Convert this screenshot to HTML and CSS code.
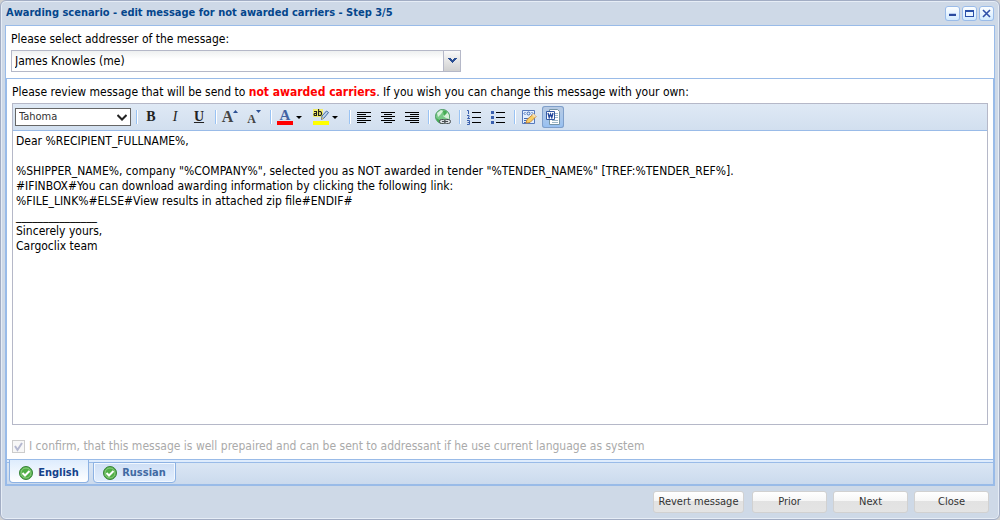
FILE: index.html
```html
<!DOCTYPE html>
<html lang="en">
<head>
<meta charset="utf-8">
<title>Awarding scenario</title>
<link rel="stylesheet" href="styles.css">
</head>
<body>
<main class="window">
  <header class="titlebar">
    <h1 class="title">Awarding scenario - edit message for not awarded carriers - Step 3/5</h1>
    <div class="tools">
      <button class="tool" type="button" aria-label="Minimize"><svg width="15" height="15" viewBox="0 0 15 15"><path d="M4 7h7v1H4z" fill="#b9cdf0"/><path d="M4 8h7v2H4z" fill="#2a4a9e"/></svg></button>
      <button class="tool" type="button" aria-label="Maximize"><svg width="15" height="15" viewBox="0 0 15 15"><path d="M3 4h9v7H3z" fill="#2a50a8"/><path d="M4 6h7v4H4z" fill="#eaf5ff"/></svg></button>
      <button class="tool" type="button" aria-label="Close window"><svg width="15" height="15" viewBox="0 0 15 15"><path d="M4 4l7 7M11 4l-7 7" stroke="#2f4fa8" stroke-width="1.6" fill="none"/></svg></button>
    </div>
  </header>

  <section class="content">
    <div class="addresser">
      <label class="label" for="addresser">Please select addresser of the message:</label>
      <div class="combo">
        <select class="combo-field" id="addresser"><option>James Knowles (me)</option></select>
        <span class="combo-trigger"><svg width="9" height="5" viewBox="0 0 9 5" shape-rendering="crispEdges"><path d="M0 0h3v1h1v1h1V1h1V0h3v1H8v1H7v1H6v1H5v1H4V4H3V3H2V2H1V1H0z" fill="#2b4f93"/></svg></span>
      </div>
    </div>

    <div class="tabpanel">
      <div class="page">
        <label class="label" for="message">Please review message that will be send to <strong class="alert">not awarded carriers</strong>. If you wish you can change this message with your own:</label>
        <div class="editor">
          <div class="toolbar">
            <div class="font">
              <select class="font-field" aria-label="Font"><option>Tahoma</option></select>
              <svg class="font-arrow" width="10" height="7" viewBox="0 0 10 7"><path d="M0.500 1l4.500 4.500L9.500 1" fill="none" stroke="#222" stroke-width="2"/></svg>
            </div>
            <div class="group">
              <button class="btn" type="button" aria-label="Bold"><span class="glyph bold">B</span></button>
              <button class="btn" type="button" aria-label="Italic"><span class="glyph italic">I</span></button>
              <button class="btn" type="button" aria-label="Underline"><span class="glyph underline">U</span></button>
            </div>
            <div class="group">
              <button class="btn" type="button" aria-label="Grow text"><span class="glyph grow">A</span><svg class="mark" width="5" height="3" viewBox="0 0 5 3"><path d="M2.500 0L5 3H0z" fill="#2b4f93"/></svg></button>
              <button class="btn" type="button" aria-label="Shrink text"><span class="glyph shrink">A</span><svg class="mark" width="5" height="3" viewBox="0 0 5 3"><path d="M0 0h5L2.500 3z" fill="#2b4f93"/></svg></button>
            </div>
            <div class="group">
              <button class="btn menu" type="button" aria-label="Font color"><span class="glyph color">A</span><svg width="6" height="3" viewBox="0 0 6 3"><path d="M0 0h6L3 3z"/></svg></button>
              <button class="btn menu" type="button" aria-label="Highlight color"><svg width="16" height="16" viewBox="0 0 16 16"><path d="M0 0h10v8H0z" fill="#f2ee6c"/><path d="M0 12h16v4H0z" fill="#ff0"/><g fill="none" stroke="#1d1d1d" stroke-width="1.100"><path d="M1 2.500h2.500v4H1.500q-1-1 0-2h2M5.600 0v6.500h2q2-2 0-4h-2"/></g><path d="M8.500 10.500l.5-3.500 4.500-5 2 1.500-4.500 5.500z" fill="#bdd3ee" stroke="#456c9f"/><path d="M8.500 10.500l.5-2.500 1.500 1.500z" fill="#e6c45a"/></svg><svg width="6" height="3" viewBox="0 0 6 3"><path d="M0 0h6L3 3z"/></svg></button>
            </div>
            <div class="group">
              <button class="btn" type="button" aria-label="Align left"><svg width="16" height="16" viewBox="0 0 16 16"><path d="M1 3.500h14M1 5.500h9M1 7.500h14M1 9.500h9M1 11.500h14M1 13.500h9" stroke="#000"/></svg></button>
              <button class="btn" type="button" aria-label="Center"><svg width="16" height="16" viewBox="0 0 16 16"><path d="M1 3.500h14M4 5.500h8M1 7.500h14M4 9.500h8M1 11.500h14M4 13.500h8" stroke="#000"/></svg></button>
              <button class="btn" type="button" aria-label="Align right"><svg width="16" height="16" viewBox="0 0 16 16"><path d="M1 3.500h14M6 5.500h9M1 7.500h14M6 9.500h9M1 11.500h14M6 13.500h9" stroke="#000"/></svg></button>
            </div>
            <div class="group">
              <button class="btn" type="button" aria-label="Hyperlink"><svg width="16" height="16" viewBox="0 0 16 16"><circle cx="7.500" cy="7.500" r="7" fill="#78c987" stroke="#4b9a62"/><path d="M2 4l4-3 2 1-2 3-3 3zM8 7l4-4 2 3v4l-3-1z" fill="#d8f1dc"/><path d="M1 9l4 2 1 3-3-1zM8 2l3 0 1 2-3 3z" fill="#46ad55"/><g fill="#d9dde2" stroke="#484e53"><rect x="4.500" y="10.500" width="6" height="4" rx="2"/><rect x="9.500" y="10.500" width="6" height="4" rx="2"/></g><path d="M7 12.500h6" stroke="#484e53"/></svg></button>
            </div>
            <div class="group">
              <button class="btn" type="button" aria-label="Numbered list"><svg width="16" height="16" viewBox="0 0 16 16"><path d="M6 3.500h9M6 8.500h9M6 13.500h9" stroke="#000"/><path d="M1 1.500h1.500V5M1 6.500h2v1.500L1.500 9.500H4M1 11.500h2.500v4H1M1.500 13.500h2" fill="none" stroke="#3a5fae"/></svg></button>
              <button class="btn" type="button" aria-label="Bullet list"><svg width="16" height="16" viewBox="0 0 16 16"><path d="M6 3.500h9M6 8.500h9M6 13.500h9" stroke="#000"/><path d="M1 2h3v3H1zM1 7h3v3H1zM1 12h3v3H1z" fill="#3a5fae"/></svg></button>
            </div>
            <div class="group">
              <button class="btn" type="button" aria-label="Source edit"><svg width="16" height="16" viewBox="0 0 16 16"><path d="M1.500 1.500h12v13h-12z" fill="#e3efff" stroke="#5579bd"/><path d="M4.500 3L3 4.500 4.500 6M10.500 3L12 4.500 10.500 6M3 9.500h6M3 11.500h4M3 13.500h3" fill="none" stroke="#4169b1"/><circle cx="7.500" cy="4.500" r="1.500" fill="none" stroke="#4169b1"/><path d="M5 14l1-3.500L12.500 5 15 7.500 9 13.500z" fill="#f8cf66" stroke="#c88b3c"/><path d="M11 6l1.500-1.500L15 7l-1.500 1.500z" fill="#f3e0ba"/></svg></button>
              <button class="btn pressed" type="button" aria-label="Word paste" aria-pressed="true"><svg width="16" height="16" viewBox="0 0 16 16"><path d="M4.500.5h8l2 2v13h-10z" fill="#fff" stroke="#7594a5"/><path d="M10 4.500h3M10 6.500h3M10 8.500h3M7 11.500h6M7 13.500h6" stroke="#9db7c6"/><path d="M1.500 2.500h8v8h-8z" fill="#fff" stroke="#345ba4"/><path d="M3 4l1.200 4.500L5.500 5l1.300 3.500L8 4" fill="none" stroke="#23479b" stroke-width="1.300"/></svg></button>
            </div>
          </div>
          <textarea class="message" id="message" spellcheck="false">Dear %RECIPIENT_FULLNAME%,

%SHIPPER_NAME%, company "%COMPANY%", selected you as NOT awarded in tender "%TENDER_NAME%" [TREF:%TENDER_REF%].
#IFINBOX#You can download awarding information by clicking the following link:
%FILE_LINK%#ELSE#View results in attached zip file#ENDIF#
_______________
Sincerely yours,
Cargoclix team</textarea>
        </div>
        <label class="confirm"><input class="check" type="checkbox" checked disabled>I confirm, that this message is well prepaired and can be sent to addressant if he use current language as system</label>
      </div>
      <nav class="tabs">
        <button class="tab active" type="button"><svg width="14" height="14" viewBox="0 0 14 14"><circle cx="7" cy="7" r="6.500" fill="#4fae45" stroke="#39833a"/><circle cx="7" cy="7" r="5" fill="none" stroke="#8fce82"/><path d="M3.500 7l2.500 2.500 4.500-4.500" fill="none" stroke="#fff" stroke-width="2"/></svg>English</button>
        <button class="tab" type="button"><svg width="14" height="14" viewBox="0 0 14 14"><circle cx="7" cy="7" r="6.500" fill="#4fae45" stroke="#39833a"/><circle cx="7" cy="7" r="5" fill="none" stroke="#8fce82"/><path d="M3.500 7l2.500 2.500 4.500-4.500" fill="none" stroke="#fff" stroke-width="2"/></svg>Russian</button>
      </nav>
    </div>
  </section>

  <footer class="actions">
    <button class="action wide" type="button">Revert message</button>
    <button class="action" type="button">Prior</button>
    <button class="action" type="button">Next</button>
    <button class="action" type="button">Close</button>
  </footer>
</main>
</body>
</html>
```
FILE: styles.css
```css
* { box-sizing: border-box; }

body {
  margin: 0;
  background: #d0d0d0;
  color: #000;
  font: 12px/16px Tahoma, "DejaVu Sans Condensed", "Noto Sans", sans-serif;
}

button, select, textarea, input { font: inherit; color: inherit; margin: 0; }
button { padding: 0; }
svg { display: block; flex: none; }

.window {
  display: flex;
  flex-direction: column;
  min-height: 100vh;
  padding: 0 4px;
  border: 1px solid #a2adc4;
  border-radius: 6px;
  background: #ced9e7;
  box-shadow: inset 0 0 0 1px #e6edf6;
}

.titlebar { display: flex; align-items: center; justify-content: space-between; height: 24px; padding: 0 1px; }
.title { margin: 0; color: #04468c; font-size: 11px; font-weight: bold; }
.tools { display: flex; gap: 2px; }
.tool {
  width: 15px;
  height: 15px;
  border: 0;
  border-radius: 3px;
  background: linear-gradient(#fff, #cfe9ff);
  box-shadow: inset 0 0 0 1px #9abbe8;
}

.content { display: flex; flex: 1; flex-direction: column; border: 1px solid #99bbe8; background: #fff; }
.addresser { padding: 5px 5px 6px; }
.label { display: block; }

.combo { display: flex; position: relative; width: 450px; max-width: 100%; margin-top: 3px; }
.combo-field {
  width: 100%;
  height: 22px;
  padding: 0 20px 0 3px;
  border: 1px solid #b5b8c8;
  border-radius: 0;
  background: linear-gradient(#eef0f0, #fff 8px);
  appearance: none;
}
.combo-trigger {
  display: flex;
  position: absolute;
  top: 1px;
  right: 1px;
  align-items: center;
  justify-content: center;
  width: 17px;
  height: 20px;
  padding-bottom: 1px;
  border-left: 1px solid #b5b8c8;
  background: linear-gradient(#fafafa, #d0d0d0);
  pointer-events: none;
}

.tabpanel { display: flex; flex: 1; flex-direction: column; border: 1px solid #99bbe8; }
.page { display: flex; flex: 1; flex-direction: column; padding: 5px; }
.alert { color: #f00; }

.editor { display: flex; flex: 1; flex-direction: column; margin-top: 3px; border: 1px solid #b5b8c8; }
.toolbar {
  display: flex;
  align-items: center;
  height: 27px;
  padding: 0 2px;
  border-bottom: 1px solid #99bbe8;
  background: linear-gradient(#dfe9f5, #d2dfef);
}
.font { display: flex; position: relative; width: 116px; margin-right: 5px; }
.font-field {
  width: 100%;
  height: 18px;
  padding: 0 16px 0 3px;
  border: 1px solid #666;
  border-radius: 0;
  background: #fff;
  color: #333;
  font-size: 11px;
  line-height: 16px;
  appearance: none;
}
.font-arrow { position: absolute; top: 6px; right: 4px; pointer-events: none; }

.group {
  display: flex;
  gap: 2px;
  padding: 0 5px 0 4px;
  background: linear-gradient(90deg, #99c3f4 1px, #fff 1px, #fff 2px, transparent 2px) 0 center / 100% 14px no-repeat;
}
.btn {
  display: flex;
  position: relative;
  align-items: center;
  justify-content: center;
  width: 22px;
  height: 22px;
  border: 0;
  border-radius: 3px;
  background: none;
}
.menu { justify-content: flex-start; gap: 3px; width: 34px; padding-left: 3px; }
.pressed { background: linear-gradient(#b9cbe2, #a9c6ea 50%, #96c0f2); box-shadow: inset 0 0 0 1px #7f9fca; }
.glyph { color: #222; font-family: "Liberation Serif", serif; font-weight: bold; }
.bold { font-size: 14px; }
.italic { font-size: 14px; font-style: italic; font-weight: normal; }
.underline { font-size: 14px; text-decoration: underline; }
.grow { font-size: 16px; color: #444; }
.shrink { padding-top: 3px; font-size: 12px; color: #444; }
.mark { align-self: flex-start; margin-top: 4px; }
.color { width: 16px; border-bottom: 4px solid #f00; color: #4262a3; font-size: 15px; line-height: 12px; }

.message {
  display: block;
  flex: 1;
  min-height: 200px;
  padding: 3px;
  border: 0;
  outline: 0;
  background: #fff;
  line-height: 15px;
  resize: none;
}

.confirm { display: flex; align-items: center; gap: 4px; margin-top: 13px; color: #aaa; }
.check {
  width: 13px;
  height: 13px;
  border: 1px solid #ccc;
  background: url("data:image/svg+xml,%3Csvg xmlns='http://www.w3.org/2000/svg' viewBox='0 0 11 11'%3E%3Cpath d='M2 5l2.500 4L9 2' fill='none' stroke='%23b4b8d0' stroke-width='2'/%3E%3C/svg%3E") #f7f7f7;
  appearance: none;
}

.tabs {
  display: flex;
  gap: 4px;
  height: 25px;
  padding: 0 2px 1px;
  border-top: 1px solid #99bbe8;
  background: linear-gradient(#deecfd 2px, #99bbe8 2px, #99bbe8 3px, #dae6f4 3px, #cbdaed);
}
.tab {
  display: flex;
  align-items: center;
  justify-content: center;
  gap: 5px;
  width: 83px;
  margin-top: 2px;
  border: 1px solid #8db2e3;
  border-radius: 0 0 4px 4px;
  background: linear-gradient(#cfdff5, #e2eefd);
  box-shadow: inset 0 0 0 1px #f2f8ff;
  color: #416aa3;
  font-size: 11px;
  font-weight: bold;
}
.active {
  width: 80px;
  margin-top: 0;
  padding-top: 3px;
  border-top: 0;
  background: linear-gradient(#deecfd, #fff);
  box-shadow: none;
  color: #15428b;
}

.actions { display: flex; flex-wrap: wrap; justify-content: flex-end; gap: 6px; padding: 5px 6px 6px; }
.action {
  width: 75px;
  height: 22px;
  border: 1px solid #d1d1d1;
  border-radius: 3px;
  background: linear-gradient(#fff, #f6f6f6 9px, #e2e2e2 9px, #e4e4e4);
  color: #333;
  font-size: 11px;
}
.wide { width: 91px; margin-right: 2px; }
```
